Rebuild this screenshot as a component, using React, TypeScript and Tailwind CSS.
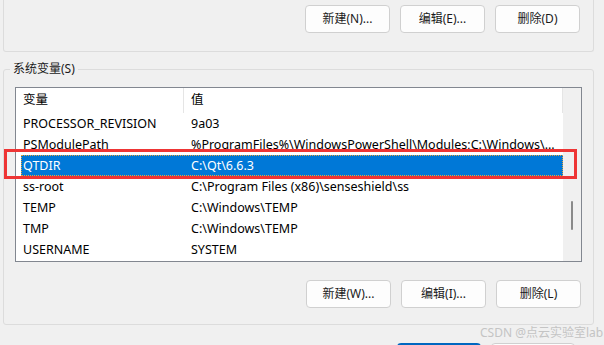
import React from "react";

const font = { fontFamily: '"Noto Sans", "Noto Sans CJK SC", sans-serif' };

const rows: [string, string][] = [
  ["PROCESSOR_REVISION", "9a03"],
  ["PSModulePath", "%ProgramFiles%\\WindowsPowerShell\\Modules;C:\\Windows\\..."],
  ["QTDIR", "C:\\Qt\\6.6.3"],
  ["ss-root", "C:\\Program Files (x86)\\senseshield\\ss"],
  ["TEMP", "C:\\Windows\\TEMP"],
  ["TMP", "C:\\Windows\\TEMP"],
  ["USERNAME", "SYSTEM"],
];

function Btn({ label }: { label: string }) {
  return (
    <button className="w-[85px] h-[28px] rounded-[4px] border border-[#d0d0d0] bg-[#fdfdfd] text-[12px] text-[#1a1a1a] flex items-center justify-center">
      {label}
    </button>
  );
}

// selected row index
const SEL = 2;

export default function App() {
  return (
    <div style={font} className="relative w-[604px] h-[345px] overflow-hidden bg-[#f0f0f0] text-[12px]">
      {/* user variables group (only bottom part visible) */}
      <div className="ml-[3px] w-[591px] h-[52px] border-x border-b border-[#dcdcdc] rounded-b-[3px] flex justify-end items-start pt-[5px] pr-[13px] gap-[10px]">
        <Btn label="新建(N)..." />
        <Btn label="编辑(E)..." />
        <Btn label="删除(D)" />
      </div>

      {/* system variables group */}
      <div className="relative ml-[3px] mt-[17px] w-[591px] h-[256px] border border-[#dcdcdc] rounded-[3px] pt-[17px] pl-[11px]">
        <span className="absolute left-[6px] top-[-9px] px-[3px] bg-[#f0f0f0] leading-[16px] text-[#1a1a1a]">系统变量(S)</span>

        <div className="w-[567px] h-[175px] border border-[#828790] bg-white flex">
          <div className="flex-1 flex flex-col text-[12.5px]">
            {/* header */}
            <div className="h-[25px] flex items-center text-black">
              <div className="w-[168px] h-full flex items-center pl-[7px] border-r border-[#e5e5e5]">变量</div>
              <div className="flex-1 h-full flex items-center pl-[7px] border-r border-[#e5e5e5]">值</div>
            </div>
            {rows.map(([k, v], i) => (
              <div key={k} className="h-[21px] flex items-center pl-[5px]">
                <div
                  className={
                    i === SEL
                      ? "flex-1 h-[21px] flex items-center pt-[1px] bg-[#0078d7] text-white border border-dotted border-[#e8a33c]"
                      : "flex-1 h-[21px] flex items-center pt-[1px] text-black border border-transparent"
                  }
                >
                  <span className="w-[163px] pl-[1px] whitespace-nowrap">{k}</span>
                  <span className="pl-[6px] whitespace-nowrap">{v}</span>
                </div>
              </div>
            ))}
          </div>
          {/* scrollbar */}
          <div className="w-[18px] bg-[#f0f0f0] flex justify-center pt-[113px]">
            <div className="w-[2px] h-[29px] bg-[#8a8a8a] rounded-full" />
          </div>
        </div>

        <div className="flex justify-end gap-[10px] mt-[18px] pr-[12px]">
          <Btn label="新建(W)..." />
          <Btn label="编辑(I)..." />
          <Btn label="删除(L)" />
        </div>
      </div>

      {/* dialog OK / Cancel buttons (cut off) */}
      <div className="flex gap-[10px] ml-[397px] mt-[18px]">
        <div className="w-[84px] h-[28px] rounded-[4px] border-2 border-[#0067c0] bg-[#fdfdfd]" />
        <div className="w-[84px] h-[28px] rounded-[4px] border border-[#d0d0d0] bg-[#fdfdfd]" />
      </div>

      {/* annotation highlight */}
      <div className="absolute left-[4px] top-[149px] w-[573px] h-[30px] border-[3px] border-[#ee3535]" />

      {/* watermark */}
      <span className="absolute left-[480px] top-[325px] whitespace-nowrap text-[12px] leading-[16px] text-[#c4c4c4]">CSDN @点云实验室lab</span>
    </div>
  );
}
